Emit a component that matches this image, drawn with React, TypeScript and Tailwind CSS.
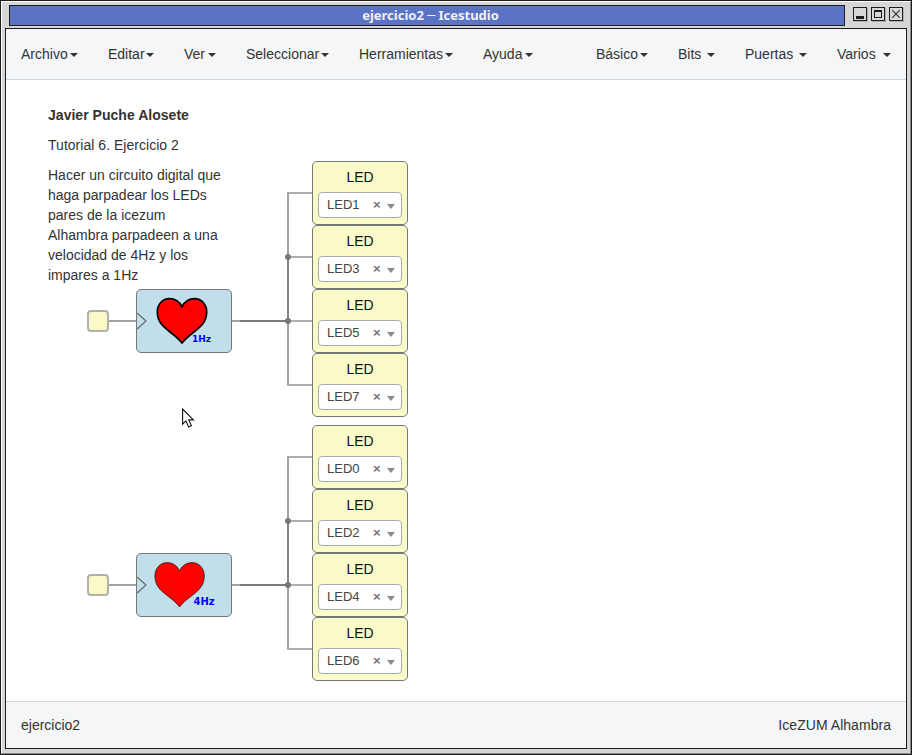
import React from "react";

const leftMenu = [
  { label: "Archivo", width: "w-[87px]" },
  { label: "Editar", width: "w-[76px]" },
  { label: "Ver", width: "w-[62px]" },
  { label: "Seleccionar", width: "w-[113px]" },
  { label: "Herramientas", width: "w-[124px]" },
  { label: "Ayuda", width: "w-[80px]" },
];
const rightMenu = [
  { label: "Básico", width: "w-[82px]" },
  { label: "Bits", width: "w-[67px]" },
  { label: "Puertas", width: "w-[92px]" },
  { label: "Varios", width: "w-[84px]" },
];

function MenuItem({ label, width }: { label: string; width: string }) {
  return (
    <li className={`flex items-center justify-between whitespace-nowrap px-[15px] leading-5 ${width}`}>
      {label}
      <span className="mt-[2px] h-0 w-0 shrink-0 border-x-4 border-t-4 border-x-transparent border-t-[#333]" />
    </li>
  );
}

function TitleBar() {
  return (
    <div className="flex h-[21px] items-start pl-[7px]">
      <div className="flex h-[21px] w-[836px] items-center justify-center border border-[#1c1c1c] bg-[#5a73c5] pl-[7px] font-['Noto_Sans','Open_Sans',sans-serif] text-[13px] leading-[19px] font-bold text-[#f0f0f0]">
        <span className="whitespace-pre">ejercicio2 </span>
        <span className="font-['DejaVu_Sans',sans-serif] font-normal">─</span>
        <span className="whitespace-pre"> Icestudio</span>
      </div>
      <div className="ml-[8px] mt-[2px] flex gap-[4px]">
        <div className="flex h-[14px] w-[14px] items-end justify-center border border-[#1c1c1c] bg-[#d8d8d8] pb-[1px] shadow-[1px_1px_0_#b0b0b0]">
          <div className="h-[3px] w-[8px] bg-[#1c1c1c]" />
        </div>
        <div className="flex h-[14px] w-[14px] items-center justify-center border border-[#1c1c1c] bg-[#d8d8d8] shadow-[1px_1px_0_#b0b0b0]">
          <div className="h-[8px] w-[8px] border border-t-2 border-[#1c1c1c]" />
        </div>
        <div className="flex h-[14px] w-[14px] items-center justify-center border border-[#1c1c1c] bg-[#d8d8d8] shadow-[1px_1px_0_#b0b0b0]">
          <svg width="8" height="8" viewBox="0 0 8 8">
            <path d="M0 0L8 8M8 0L0 8" stroke="#333" strokeWidth="1.2" />
          </svg>
        </div>
      </div>
    </div>
  );
}

function LedBlock({ value }: { value: string }) {
  return (
    <div className="h-[64px] w-[96px] rounded-[5px] border border-[#777] bg-[#fafac8] px-[5px] pt-[5px]">
      <div className="text-center text-[14px] leading-5 text-[#111]">LED</div>
      <div className="mt-[5px] flex h-[26px] items-center rounded-[4px] border border-[#aaa] bg-white pl-[8px] text-[13px] text-[#444]">
        <span className="w-[46px] leading-6">{value}</span>
        <span className="w-[14px] text-[13px] leading-[22px] font-bold text-[#777]">×</span>
        <span className="mt-[3px] h-0 w-0 border-x-4 border-t-[5px] border-x-transparent border-t-[#888]" />
      </div>
    </div>
  );
}

function InputPin() {
  return <div className="h-[22px] w-[22px] rounded-[4px] border-2 border-[#b1b1a9] bg-[#fafac8]" />;
}

function HeartBlock({ label, thick }: { label: string; thick?: boolean }) {
  return (
    <div className="h-[64px] w-[96px] rounded-[5px] border border-[#777] bg-[#c0dfeb]">
      <svg width="94" height="62" viewBox="137 290 94 62">
        <path d="M137 313L146 321L137 329" fill="none" stroke="#666" strokeWidth="1.2" />
        <g transform={thick ? "translate(0 0)" : "translate(-2.4 -0.1)"}>
          <path
            d="M182 306.8C179 300.8 174 298.7 169.5 298.7C162.5 298.7 157.3 304.5 157.3 312C157.3 328 173 331 182 343.1C191 331 206.7 328 206.7 312C206.7 304.5 201.5 298.7 194.5 298.7C190 298.7 185 300.8 182 306.8Z"
            fill="#ff0000"
            stroke={thick ? "#000" : "#222"}
            strokeWidth={thick ? 1.7 : 0.8}
          />
        </g>
        <text
          x={thick ? 192 : 193.5}
          y={thick ? 342 : 341}
          fill="#0000ff"
          fontWeight="bold"
          fontSize={thick ? 9 : 10}
          fontFamily="DejaVu Sans, sans-serif"
        >
          {label}
        </text>
      </svg>
    </div>
  );
}

function Wires() {
  return (
    <svg className="h-[256px] w-[330px]" viewBox="82 161 330 256">
      <g fill="none" stroke="#777" strokeWidth="1.7" strokeOpacity="0.8">
        <path d="M109 321H136" />
        <path d="M232 321H240" />
        <path d="M240 321H288V193H312" />
        <path d="M240 321H288V257H312" />
        <path d="M240 321H312" />
        <path d="M240 321H288V385H312" />
      </g>
      <circle cx="288" cy="257" r="3" fill="#777" />
      <circle cx="288" cy="321" r="3" fill="#777" />
    </svg>
  );
}

function Circuit({ leds, label, thick }: { leds: string[]; label: string; thick?: boolean }) {
  return (
    <div className="relative h-[256px] w-[330px]">
      <div className="absolute inset-0">
        <Wires />
      </div>
      <div className="absolute left-[5px] top-[149px]">
        <InputPin />
      </div>
      <div className="absolute left-[54px] top-[128px]">
        <HeartBlock label={label} thick={thick} />
      </div>
      <div className="absolute left-[230px] top-0">
        {leds.map((led) => (
          <LedBlock key={led} value={led} />
        ))}
      </div>
    </div>
  );
}

export default function App() {
  return (
    <div className="h-[755px] w-[912px] overflow-hidden border border-[#1c1c1c] bg-[#d6d6d6] font-['Liberation_Sans',Arial,sans-serif] text-[14px] text-[#333]">
      <div className="h-full border border-t-white border-r-[#8a8a8a] border-b-[#8a8a8a] border-l-white pt-[3px]">
        <TitleBar />
        <div className="ml-[3px] mt-[2px] flex h-[721px] w-[902px] flex-col border border-[#1c1c1c] bg-white">
          <nav className="flex h-[51px] shrink-0 justify-between border-b border-[#d3d6d8] bg-[#f4f6f8]">
            <ul className="flex">
              {leftMenu.map((m) => (
                <MenuItem key={m.label} label={m.label} width={m.width} />
              ))}
            </ul>
            <ul className="flex">
              {rightMenu.map((m) => (
                <MenuItem key={m.label} label={m.label} width={m.width} />
              ))}
            </ul>
          </nav>
          <main className="relative flex-1 overflow-hidden">
            <div className="absolute left-[76px] top-[81px]">
              <Circuit leds={["LED1", "LED3", "LED5", "LED7"]} label="1Hz" thick />
            </div>
            <div className="absolute left-[76px] top-[345px]">
              <Circuit leds={["LED0", "LED2", "LED4", "LED6"]} label="4Hz" />
            </div>
            <div className="absolute left-[42px] top-[25px] w-[182px] leading-5">
              <p className="mb-[10px] font-bold tracking-[0.03px]">Javier Puche Alosete</p>
              <p className="mb-[10px] tracking-[0.03px]">Tutorial 6. Ejercicio 2</p>
              <p>
                Hacer un circuito digital que haga parpadear los LEDs
                <br />
                pares de la icezum
                <br />
                Alhambra parpadeen a una velocidad de 4Hz y los impares a 1Hz
              </p>
            </div>
            <svg className="absolute left-[176px] top-[328px] h-[22px] w-[15px]" viewBox="0 0 15 22">
              <path
                d="M0.6 1V16.2L4 12.9L6.6 19L9.4 17.8L6.8 11.9H11.4Z"
                fill="#fff"
                stroke="#111"
                strokeWidth="1.1"
              />
            </svg>
          </main>
          <footer className="flex h-[47px] shrink-0 items-center justify-between border-t border-[#d3d6d8] bg-[#f4f6f8] px-[15px]">
            <span>ejercicio2</span>
            <span className="tracking-[0.04px]">IceZUM Alhambra</span>
          </footer>
        </div>
      </div>
    </div>
  );
}
